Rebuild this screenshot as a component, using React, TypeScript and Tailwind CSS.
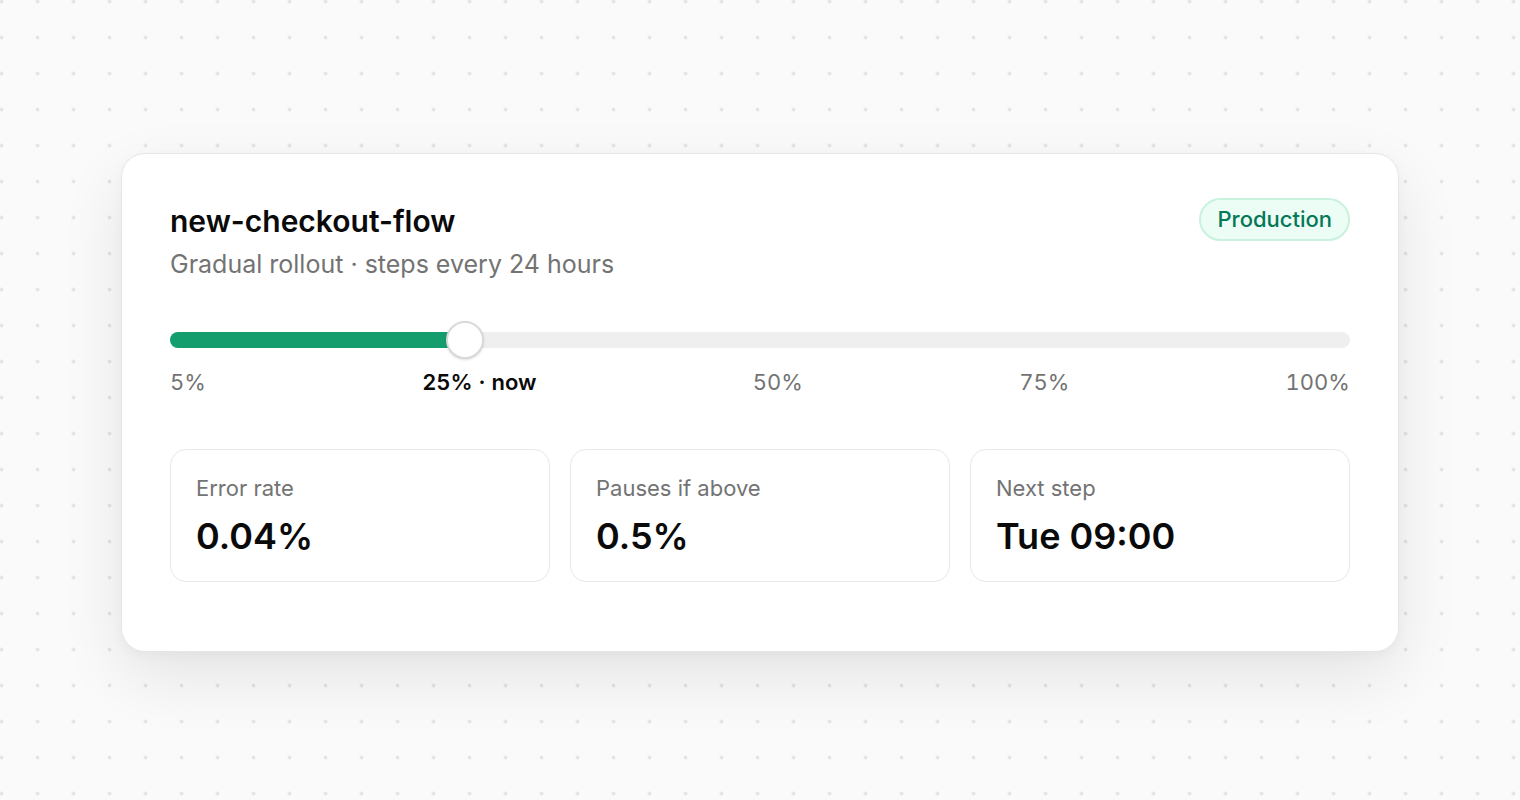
const steps = [
    { label: '5%', current: false },
    { label: '25% · now', current: true },
    { label: '50%', current: false },
    { label: '75%', current: false },
    { label: '100%', current: false }
];

const stats = [
    { label: 'Error rate', value: '0.04%' },
    { label: 'Pauses if above', value: '0.5%' },
    { label: 'Next step', value: 'Tue 09:00' }
];

const StatBox = ({ label, value }: { label: string; value: string }) => (
    <div className="rounded-2xl border border-[#e8e8e8] bg-white px-[25px] pt-6 pb-[25px]">
        <div className="text-[22px] leading-7 text-[#737373]">{label}</div>
        <div className="mt-[14px] text-[36px] leading-10 font-semibold text-[#0a0a0a]">{value}</div>
    </div>
);

const App = () => {
    const progress = 25;

    return (
        <div
            className="min-h-screen w-full pt-1 flex items-center justify-center bg-[#fafafa] bg-[radial-gradient(circle,#dedede_1.4px,transparent_1.8px)] bg-size-[36px_36px] bg-position-[-16.5px_-16.5px]"
            style={{ fontFamily: 'Inter, "Noto Sans", sans-serif' }}
        >
            <div className="w-[1278px] rounded-[24px] border border-[#e6e6e6] bg-white px-12 pt-[47px] pb-[69px] shadow-[0_24px_64px_rgba(0,0,0,0.09),0_4px_12px_rgba(0,0,0,0.03)]">
                {/* header */}
                <div className="flex items-start justify-between">
                    <div>
                        <h1 className="text-[30px] leading-10 font-semibold text-[#0a0a0a]">new-checkout-flow</h1>
                        <p className="mt-[7px] text-[25px] leading-8 text-[#737373]">Gradual rollout · steps every 24 hours</p>
                    </div>
                    <span className="-mt-[3px] rounded-full border-2 border-[#c8f2dd] bg-[#ecfdf5] px-4 py-[6px] text-[22px] leading-[27px] font-medium text-[#047857]">
                        Production
                    </span>
                </div>

                {/* rollout track */}
                <div className="mt-[52px]">
                    <div className="relative h-4 rounded-full bg-[#efefef]">
                        <div className="h-4 rounded-full bg-[#149e6d]" style={{ width: `${progress}%` }} />
                        <div
                            className="absolute top-1/2 h-[38px] w-[38px] -translate-x-1/2 -translate-y-1/2 rounded-full border-2 border-[#d9d9d9] bg-white shadow-sm"
                            style={{ left: `${progress}%` }}
                        />
                    </div>
                    <div className="mt-5 flex justify-between text-[22px] leading-7 tabular-nums">
                        {steps.map((s) => (
                            <span key={s.label} className={s.current ? 'font-semibold text-[#0a0a0a]' : 'text-[#737373]'}>
                                {s.label}
                            </span>
                        ))}
                    </div>
                </div>

                {/* stats */}
                <div className="mt-[53px] grid grid-cols-3 gap-5">
                    {stats.map((s) => (
                        <StatBox key={s.label} label={s.label} value={s.value} />
                    ))}
                </div>
            </div>
        </div>
    );
};

export default App;
